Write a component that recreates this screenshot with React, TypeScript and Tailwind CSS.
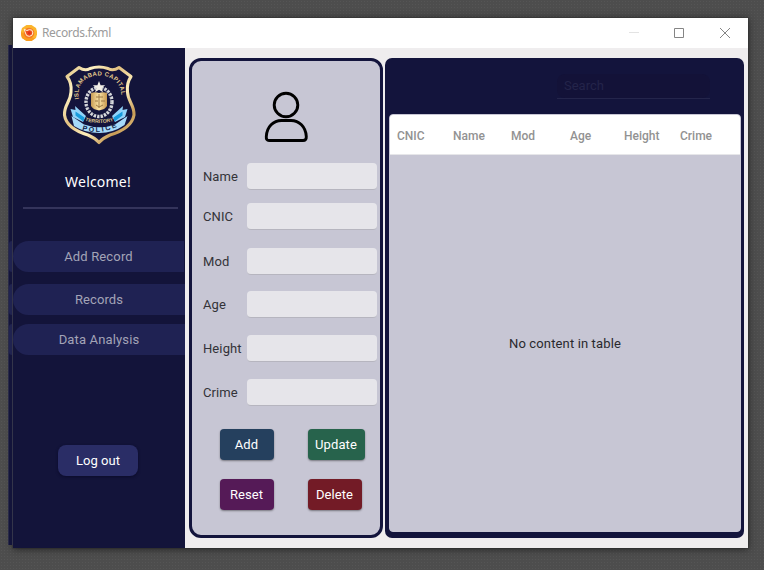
import React from 'react';

const fields = [
  { label: 'Name', gap: 'mt-0' },
  { label: 'CNIC', gap: 'mt-[13px]' },
  { label: 'Mod', gap: 'mt-[18px]' },
  { label: 'Age', gap: 'mt-[16px]' },
  { label: 'Height', gap: 'mt-[17px]' },
  { label: 'Crime', gap: 'mt-[17px]' },
];

const columns = [
  { label: 'CNIC', width: 'w-[56px]' },
  { label: 'Name', width: 'w-[58px]' },
  { label: 'Mod', width: 'w-[59px]' },
  { label: 'Age', width: 'w-[54px]' },
  { label: 'Height', width: 'w-[56px]' },
  { label: 'Crime', width: 'w-[60px]' },
];

function AppIcon() {
  return (
    <svg width="16" height="16" viewBox="0 0 16 16">
      <path d="M5.500 0h5L15 3l1 3.500v3L15 13l-4.500 3h-5L1 13 0 9.500v-3L1 3z" fill="#fbb42b" />
      <path d="M0 7v2.500L1 13l4.500 3h5l3.500-2.500L8 11z" fill="#fa9c1f" />
      <circle cx="8" cy="8" r="5.300" fill="#f77a24" />
      <path d="M3.200 4.200l2.600 1.400 2.500-.9 2.600.5.900 2.700-.9 2.400-2.600 1-2.600-.7L4.500 8z" fill="#ee4d1d" stroke="#fff3d8" strokeWidth="1" />
      <circle cx="8.300" cy="8" r="1.400" fill="#e5301c" />
    </svg>
  );
}

function Badge() {
  return (
    <svg className="overflow-visible" width="74" height="82" viewBox="0 0 74 82">
      <defs>
        <linearGradient id="gold" x1="0" y1="0" x2="1" y2="1">
          <stop offset="0" stopColor="#d9b876" />
          <stop offset=".2" stopColor="#fff3c4" />
          <stop offset=".4" stopColor="#e2c080" />
          <stop offset=".6" stopColor="#fff0bd" />
          <stop offset=".8" stopColor="#c79b55" />
          <stop offset="1" stopColor="#f6e0a0" />
        </linearGradient>
        <linearGradient id="core" x1="0" y1="0" x2="1" y2="0">
          <stop offset="0" stopColor="#c79b55" />
          <stop offset=".5" stopColor="#fbe3a6" />
          <stop offset="1" stopColor="#c7984f" />
        </linearGradient>
        <path id="topArc" d="M17.500 37C8 3 66 3 58.500 37" />
        <path id="midArc" d="M22 56.500Q37.500 61.500 53 56.500" />
        <path id="lowArc" d="M19 65.500Q37.500 72 58 61.500" />
      </defs>
      <path
        d="M17 3.500Q23 7.500 28 4.500Q37 1.500 46 4.500Q51 7.500 57 3.500L69 12.500Q64.500 19 65.500 28C66 38 72.500 41 72 51C70 62 58 68 48 71Q41 74 37 78.500Q33 74 26 71C16 68 4 62 2.500 51C2 41 8.500 38 9 28Q10 19 5 12.500Z"
        fill="#14143c" stroke="url(#gold)" strokeWidth="3.100" strokeLinejoin="round"
      />
      <ellipse cx="37" cy="38" rx="13" ry="14.500" fill="none" stroke="#d7d8dc" strokeWidth="3.400" strokeDasharray="2.400 1.100" />
      <ellipse cx="37" cy="38" rx="12" ry="13.500" fill="none" stroke="#8e919b" strokeWidth="1" strokeDasharray="1 2" />
      <path d="M37 17l1.600 4.200h4.600l-3.700 2.800 1.500 4.300-4-2.500-4 2.500 1.500-4.300-3.700-2.800h4.600z" fill="#f4f0e8" />
      <path d="M29 29Q33 27.500 37 29Q41 27.500 45 29V42Q43 45.500 37 46.500Q31 45.500 29 42Z" fill="url(#core)" />
      <path d="M37 30v14M34 33h7M33 37h3m3 0h4M34 41l3 2 4-2" stroke="#9c7945" strokeWidth="1" fill="none" />
      <path d="M8.500 45l5 1-.5-4 11 10-3 6-10-5zM65.500 45l-5 1 .5-4-11 10 3 6 10-5z" fill="#91d3f9" />
      <path d="M13.500 47.500l9 6-1 4-8-6zM60.500 47.500l-9 6 1 4 8-6z" fill="#189bdc" />
      <path d="M9.500 52L22 60.500Q37.500 66 53 60.500L65.500 52L62.500 61Q51 69 37.500 69Q23 69 12 62Z" fill="#a6dafa" />
      <text fontFamily="Liberation Sans, sans-serif" fontWeight="700" fontSize="6" fill="#e2c88d">
        <textPath href="#topArc" startOffset="2" textLength="69" lengthAdjust="spacing">ISLAMABAD CAPITAL</textPath>
      </text>
      <text fontFamily="Liberation Sans, sans-serif" fontWeight="700" fontSize="5" fill="#dfc78d">
        <textPath href="#midArc" startOffset="1" textLength="29" lengthAdjust="spacingAndGlyphs">TERRITORY</textPath>
      </text>
      <text fontFamily="Liberation Sans, sans-serif" fontWeight="700" fontSize="7" fill="#11193f">
        <textPath href="#lowArc" startOffset="1" textLength="36" lengthAdjust="spacing">POLICE</textPath>
      </text>
    </svg>
  );
}

function Sidebar() {
  const item = 'flex h-[31px] items-center justify-center rounded-l-full bg-[#1f2253]';
  return (
    <aside className="flex w-[172px] flex-col bg-[#13143a] text-[13px] text-[#a3a4b7]">
      <div className="mt-[16px] ml-[49px] h-[82px]"><Badge /></div>
      <h1 className="mt-[24px] w-[170px] text-center font-['Noto_Sans',sans-serif] text-[14px] leading-[23px] tracking-[0.2px] text-white">Welcome!</h1>
      <div className="mt-[14px] ml-[10px] h-[2px] w-[155px] bg-[#34345b]" />
      <button className={`mt-[32px] w-[171px] tracking-[0.15px] ${item}`}>Add Record</button>
      <button className={`mt-[12px] tracking-[0.1px] ${item}`}>Records</button>
      <button className={`mt-[9px] tracking-[0.15px] ${item}`}>Data Analysis</button>
      <button className="mt-[90px] ml-[45px] h-[31px] w-[80px] rounded-[8px] bg-[#2a2d66] text-white shadow-[0_1px_3px_#0b0b2b]">Log out</button>
    </aside>
  );
}

function RecordForm() {
  const button = 'h-[31px] rounded-[4px] pr-px text-[13px] tracking-[0.08px] text-white shadow-[0_1px_2px_#00000066]';
  return (
    <section className="flex w-[194px] flex-col rounded-[12px] border-[3px] border-[#13143c] bg-[#c7c6d4] text-[13px] text-[#333338]">
      <svg className="mt-[30px] ml-[72px] h-[52px] w-[44px]" viewBox="0 0 44 52" fill="none" stroke="#000" strokeWidth="2.900">
        <circle cx="22" cy="14" r="11.800" />
        <path d="M5 49.500H39Q42.500 49.500 42.300 45.500C41.800 35.500 35 29.500 27 29.500H17.500C9.500 29.500 2.800 35.500 2.300 45.500Q2 49.500 5 49.500Z" />
      </svg>
      <div className="mt-[20px] flex flex-col">
        {fields.map((field) => (
          <label key={field.label} className={`flex h-[27px] items-center pl-[11px] ${field.gap}`}>
            <span className="w-[44px] tracking-[0.1px]">{field.label}</span>
            <input className="h-[27px] w-[130px] rounded-[4px] border-b border-[#b6b5bf] bg-[#e6e5ea]" />
          </label>
        ))}
      </div>
      <div className="mt-[23px] ml-[28px] grid grid-cols-[88px_57px] gap-y-[19px]">
        <button className={`w-[54px] bg-[#25405e] ${button}`}>Add</button>
        <button className={`w-[57px] bg-[#27634c] ${button}`}>Update</button>
        <button className={`w-[54px] bg-[#551a57] ${button}`}>Reset</button>
        <button className={`w-[54px] bg-[#731b26] ${button}`}>Delete</button>
      </div>
    </section>
  );
}

function RecordTable() {
  return (
    <section className="ml-[2px] flex w-[359px] flex-col rounded-[7px] bg-[#13143c] pl-[4px]">
      <div className="mt-[14px] ml-[168px] flex h-[27px] w-[153px] items-center border-b border-[#24254b] pt-[2px] text-[13px] text-[#24244a]">
        <span className="flex h-full w-full items-center rounded-[8px] bg-[#131238] pl-[7px]">Search</span>
      </div>
      <div className="mt-[15px] flex h-[418px] w-[352px] flex-col overflow-hidden rounded-[4px] border border-[#c7c6d4] bg-[#c7c6d4]">
        <div className="flex h-[40px] shrink-0 items-center border-b border-[#e6e6e9] bg-white pt-[2px] pl-[7px] text-[12px] font-medium text-[#929292]">
          {columns.map((column) => <span key={column.label} className={`shrink-0 ${column.width}`}>{column.label}</span>)}
        </div>
        <div className="flex grow items-center justify-center pt-[2px] text-[13px] tracking-[0.14px] text-[#29292d]">No content in table</div>
      </div>
    </section>
  );
}

export default function App() {
  return (
    <div className="flex h-[570px] w-[764px] overflow-hidden bg-[#4d4d4d] bg-[radial-gradient(#555_0.7px,transparent_0.8px)] bg-[size:3px_3px] pt-[18px] font-[Roboto,sans-serif]">
      <div className="relative z-10 mt-[27px] ml-[8px] flex h-[500px] w-[5px] flex-col border-r border-l border-r-[#34354a] border-l-[#292a47] bg-[#13143a]">
        <span className="mt-[196px] h-[31px] rounded-l-full bg-[#202350]" />
        <span className="mt-[12px] h-[31px] rounded-l-full bg-[#202350]" />
        <span className="mt-[9px] h-[31px] rounded-l-full bg-[#202350]" />
      </div>
      <main className="h-[530px] w-[735px] bg-[#efedee] shadow-[0_1px_7px_#222,0_0_0_1px_#454545]">
        <header className="flex h-[30px] items-center bg-white pl-[8px]">
          <AppIcon />
          <span className="ml-[5px] w-[574px] shrink-0 font-['Noto_Sans',sans-serif] text-[12px] tracking-[-0.35px] text-[#9b9b9b]">Records.fxml</span>
          <svg className="shrink-0" width="116" height="12" viewBox="0 0 116 12" fill="none" stroke="#858585">
            <path d="M13 5.500h10" stroke="#e3e3e3" />
            <path d="M58.500 1.500h9v9h-9z" />
            <path d="M104 1l10 10M114 1L104 11" />
          </svg>
        </header>
        <div className="flex h-[500px]">
          <Sidebar />
          <div className="flex h-[490px] pt-[10px] pl-[4px]">
            <RecordForm />
            <RecordTable />
          </div>
        </div>
      </main>
    </div>
  );
}
